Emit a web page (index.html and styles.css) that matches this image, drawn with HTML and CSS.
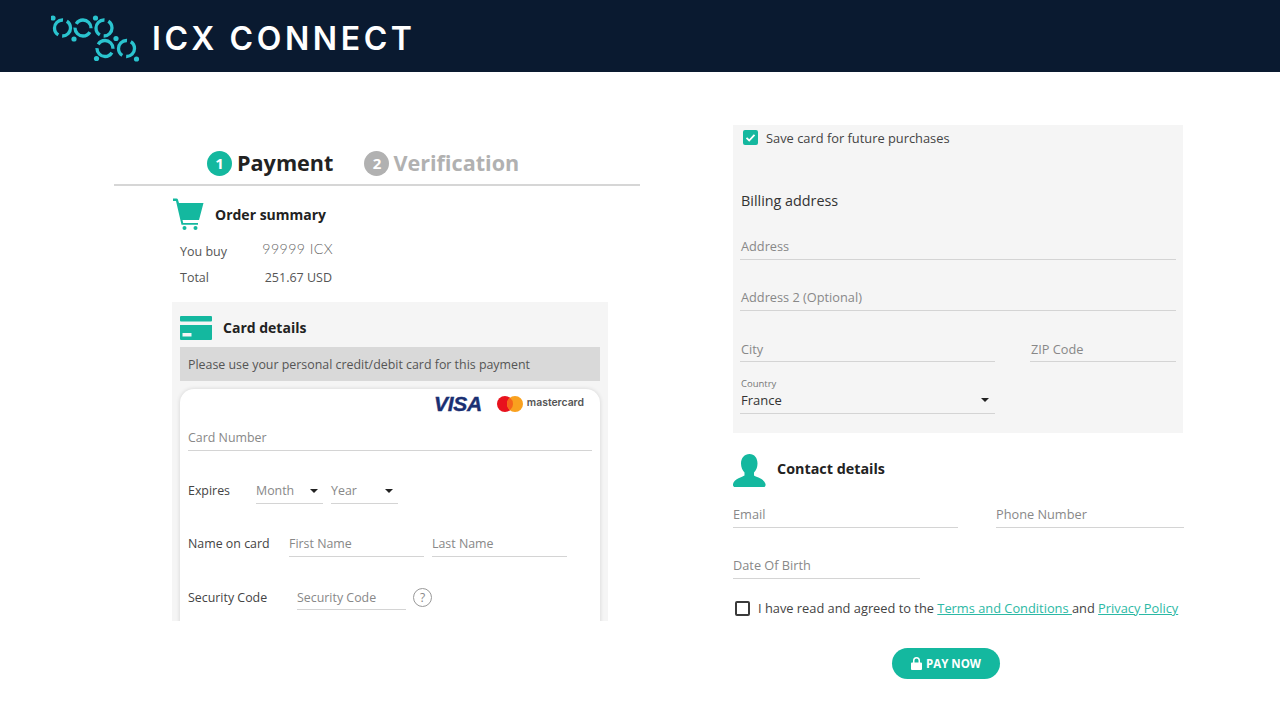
FILE: index.html
```html
<!DOCTYPE html>
<html lang="en">
<head>
<meta charset="utf-8">
<title>ICX Connect</title>
<link rel="stylesheet" href="styles.css">
</head>
<body>
<header class="topbar">
  <svg class="logo" width="90" height="50" viewBox="0 0 90 50" fill="none">
    <g class="logo-rings">
      <circle cx="11.5" cy="14" r="8"/>
      <circle class="ring-alt" cx="32" cy="14" r="8"/>
      <circle cx="53" cy="14" r="8"/>
      <circle class="ring-alt" cx="54" cy="34.5" r="8"/>
      <circle cx="75.5" cy="34.5" r="8"/>
    </g>
    <g class="logo-dots">
      <circle cx="2" cy="4" r="2.6"/>
      <circle cx="23" cy="25" r="2.6"/>
      <circle cx="44.5" cy="4" r="2.6"/>
      <circle cx="65" cy="24.5" r="2.6"/>
      <circle cx="45.5" cy="44.5" r="2.6"/>
      <circle cx="85.5" cy="45" r="2.6"/>
    </g>
  </svg>
  <span class="brand">ICX CONNECT</span>
</header>

<main class="slide">
  <section class="left">
    <div class="steps">
      <span class="step-num">1</span><span class="step-name">Payment</span>
      <span class="step-num off">2</span><span class="step-name off">Verification</span>
    </div>

    <div class="summary">
      <div class="summary-head">
        <svg class="icon-cart" width="32" height="33" viewBox="0 0 32 33">
          <path d="M1 .5h3.500a1.500 1.500 0 0 1 1.400 1L7 5h24.500l-4.500 17H10.500l.7 3H26v1.800H9.500L4 3H1z"/>
          <circle cx="12.5" cy="30" r="2"/>
          <circle cx="23.5" cy="30" r="2"/>
        </svg>
        <h2 class="section-title">Order summary</h2>
      </div>
      <div class="summary-row first-row"><span class="summary-label">You buy</span><span class="summary-amount">99999 ICX</span></div>
      <div class="summary-row"><span class="summary-label">Total</span><span class="summary-total">251.67 USD</span></div>
    </div>

    <div class="card-panel">
      <div class="card-head">
        <svg class="icon-card" width="32" height="24" viewBox="0 0 32 24">
          <rect width="32" height="5.5" rx="1"/>
          <path d="M0 9h32v14a1 1 0 0 1-1 1H1a1 1 0 0 1-1-1zM2.500 17v3.500h9V17z" fill-rule="evenodd"/>
        </svg>
        <h2 class="section-title">Card details</h2>
      </div>
      <p class="notice">Please use your personal credit/debit card for this payment</p>
      <div class="card-form">
        <div class="brands">
          <span class="visa">VISA</span>
          <svg class="mc-mark" width="26" height="16" viewBox="0 0 26 16">
            <circle cx="8" cy="8" r="8" fill="#e8121d"/>
            <circle cx="18" cy="8" r="8" fill="#f9a11f"/>
            <path d="M13 1.750a8 8 0 0 1 0 12.500 8 8 0 0 1 0-12.500z" fill="#f5651b"/>
          </svg>
          <span class="mc-text">mastercard</span>
        </div>
        <div class="field card-number">Card Number</div>
        <div class="form-row row-expires">
          <span class="row-label label-expires">Expires</span>
          <div class="field select month">Month<i class="caret"></i></div>
          <div class="field select year">Year<i class="caret"></i></div>
        </div>
        <div class="form-row row-name">
          <span class="row-label label-name">Name on card</span>
          <div class="field first">First Name</div>
          <div class="field last">Last Name</div>
        </div>
        <div class="form-row row-code">
          <span class="row-label label-code">Security Code</span>
          <div class="field code">Security Code</div>
          <span class="help">?</span>
        </div>
      </div>
    </div>
  </section>

  <section class="right">
    <div class="billing">
      <label class="save">
        <span class="check-on">
          <svg width="15" height="15" viewBox="0 0 15 15" fill="none"><path d="M3.500 7.800l2.700 2.700 5.300-5.700"/></svg>
        </span>
        Save card for future purchases
      </label>
      <h3 class="billing-title">Billing address</h3>
      <div class="field full">Address</div>
      <div class="field full">Address 2 (Optional)</div>
      <div class="billing-row">
        <div class="field city">City</div>
        <div class="field zip">ZIP Code</div>
      </div>
      <div class="country">
        <span class="country-label">Country</span>
        <div class="field select country-value">France<i class="caret"></i></div>
      </div>
    </div>

    <div class="contact-head">
      <svg class="icon-person" width="33" height="33" viewBox="0 0 33 33">
        <path d="M16.500 0c5 0 8 4 8 9.500 0 4-1.500 7-3.500 9v3c2 1.500 10 3 11.500 8.500.3 1.500-.5 3-2 3H2c-1.500 0-2.300-1.500-2-3 1.500-5.500 9.500-7 11.500-8.500v-3c-2-2-3.500-5-3.500-9C8 4 11.500 0 16.500 0z"/>
      </svg>
      <h2 class="section-title">Contact details</h2>
    </div>
    <div class="contact-row">
      <div class="field email">Email</div>
      <div class="field phone">Phone Number</div>
    </div>
    <div class="field dob">Date Of Birth</div>
    <div class="terms">
      <span class="check-off"></span>
      <span>I have read and agreed to the <a href="#">Terms and Conditions </a>and <a href="#">Privacy Policy</a></span>
    </div>
    <button class="pay" type="button">
      <svg width="11" height="13" viewBox="0 0 11 13"><path d="M2 5.500V3.600a3.500 3.500 0 0 1 7 0v1.900h1a1 1 0 0 1 1 1V12a1 1 0 0 1-1 1H1a1 1 0 0 1-1-1V6.500a1 1 0 0 1 1-1zm1.500 0h4V3.600a2 2 0 0 0-4 0z" fill-rule="evenodd"/></svg>
      PAY NOW
    </button>
  </section>
</main>
</body>
</html>
```
FILE: styles.css
```css
* { box-sizing: border-box; }
html, body { margin: 0; height: 720px; overflow: hidden; background: #fff; }
body { font-family: "Open Sans", "Liberation Sans", sans-serif; color: #444; font-size: 13px; }

.topbar { height: 72px; background: #0a1a30; display: flex; align-items: center; padding-left: 51px; }
.logo { display: block; margin-top: 6px; flex: none; }
.logo-rings circle { stroke: #2ac4cf; stroke-width: 3.3; stroke-dasharray: 21.13 4; stroke-dashoffset: 8.28; }
.logo-rings .ring-alt { stroke-dashoffset: 20.85; }
.logo-dots circle { fill: #2ac4cf; }
.brand { margin-left: 11px; margin-top: 6px; font-family: Inter, sans-serif; font-weight: 600; font-size: 32px; letter-spacing: 3.6px; color: #fff; line-height: 1; white-space: nowrap; }

.slide { display: flex; align-items: flex-start; }

/* left column */
.left { width: 526px; margin-left: 114px; margin-top: 73px; }
.steps { height: 41px; padding-left: 93px; padding-bottom: 3px; border-bottom: 2px solid #d6d6d6; display: flex; align-items: center; }
.step-num { width: 25px; height: 25px; border-radius: 50%; background: #14b89f; color: #fff; font-size: 15px; font-weight: 700; display: flex; align-items: center; justify-content: center; }
.step-num.off { background: #b1b1b1; margin-left: 31px; }
.step-name { margin-left: 5px; font-size: 21.6px; font-weight: 700; color: #222; line-height: 1; }
.step-name.off { color: #b1b1b1; margin-left: 4px; }

.summary { margin-left: 58px; width: 170px; }
.summary-head { display: flex; align-items: center; height: 33px; margin-top: 12px; }
.icon-cart { fill: #14b89f; flex: none; }
.section-title { margin: 0; font-size: 14px; font-weight: 700; color: #222; white-space: nowrap; }
.summary-head .section-title { margin-left: 11px; }
.summary-row { margin-left: 8px; height: 26px; display: flex; justify-content: space-between; align-items: center; width: 152px; font-size: 12.5px; color: #555; }
.first-row { margin-top: 7px; }
.summary-amount { margin: 0 -1px 5px 0; font-family: Lato, sans-serif; font-weight: 300; font-size: 14.2px; letter-spacing: .4px; color: #666; }

.card-panel { margin-left: 58px; margin-top: 12px; width: 436px; height: 319px; background: #f5f5f5; padding: 14px 8px 0; overflow: hidden; }
.card-head { display: flex; align-items: center; height: 24px; }
.icon-card { fill: #14b89f; flex: none; }
.card-head .section-title { margin-left: 11px; margin-bottom: 1px; }
.notice { margin: 7px 0 0; height: 34px; background: #d9d9d9; padding-left: 8px; line-height: 36px; font-size: 12.4px; color: #555; white-space: nowrap; }
.card-form { margin-top: 8px; height: 260px; background: #fff; border-radius: 14px; box-shadow: 0 0 4px rgba(0,0,0,.14); padding: 6px 8px 0; }
.brands { display: flex; align-items: center; justify-content: flex-end; height: 17px; padding-right: 8px; }
.visa { font-family: "Liberation Sans", sans-serif; font-weight: 700; font-style: italic; font-size: 21px; letter-spacing: -.3px; color: #1a2f72; -webkit-text-stroke: .4px #1a2f72; line-height: 1; }
.mc-mark { margin-left: 15px; }
.mc-text { margin-left: 4px; font-family: Inter, sans-serif; font-size: 10.4px; font-weight: 600; color: #555; line-height: 1; }

.field { height: 24px; line-height: 21px; border-bottom: 1px solid #d4d4d4; color: #888; font-size: 12.4px; white-space: nowrap; position: relative; }
.card-number { margin-top: 15px; }
.form-row { display: flex; align-items: flex-end; }
.row-label { color: #444; font-size: 12.4px; line-height: 20px; padding-bottom: 3px; }
.row-expires { margin-top: 29px; }
.label-expires { width: 68px; padding-bottom: 3px; }
.month { width: 67px; }
.year { width: 67px; margin-left: 8px; }
.row-name { margin-top: 29px; }
.label-name { width: 101px; }
.first { width: 135px; }
.last { width: 135px; margin-left: 8px; }
.row-code { margin-top: 29px; }
.label-code { width: 109px; padding-bottom: 2px; }
.code { width: 109px; line-height: 23px; }
.help { margin: 0 0 3px 7px; width: 19px; height: 19px; border-radius: 50%; border: 1px solid #999; color: #888; font-size: 12px; line-height: 17px; text-align: center; }

.caret { position: absolute; right: 5px; top: 9px; width: 0; height: 0; border: 4.5px solid transparent; border-top-color: #222; border-bottom-width: 0; }

/* right column */
.right { width: 451px; margin-left: 93px; margin-top: 53px; }
.billing { width: 450px; height: 308px; background: #f5f5f5; padding: 0 7px 0 7px; }
.save { display: flex; align-items: center; gap: 8px; padding: 2px 0 0 3px; height: 24px; font-size: 12.85px; color: #444; }
.check-on { width: 15px; height: 15px; border-radius: 2px; background: #14b89f; flex: none; display: block; margin-top: -1px; }
.check-on svg { display: block; stroke: #fff; stroke-width: 1.8; }
.billing-title { margin: 41px 0 0 1px; font-size: 14.35px; font-weight: 400; color: #333; line-height: 22px; }
.billing .field { padding-left: 1px; font-size: 12.75px; line-height: 22px; }
.billing .full { margin-top: 27px; line-height: 21px; }
.billing .billing-title + .full { margin-top: 24px; }
.billing-row { display: flex; margin-top: 27px; }
.city { width: 255px; }
.zip { width: 146px; margin-left: 35px; }
.country { width: 255px; margin-top: 16px; }
.country-label { display: block; font-size: 9.5px; line-height: 12px; color: #777; padding-left: 1px; }
.billing .country-value { color: #333; font-size: 13px; line-height: 20px; }
.country-value .caret { right: 6px; top: 8px; }

.contact-head { display: flex; align-items: flex-start; height: 33px; margin-top: 21px; }
.icon-person { fill: #14b89f; flex: none; }
.contact-head .section-title { margin-left: 11px; margin-top: 5px; font-size: 14.35px; line-height: 20px; }
.contact-row { display: flex; margin-top: 17px; }
.email { width: 225px; font-size: 12.75px; line-height: 20px; }
.phone { width: 188px; margin-left: 38px; font-size: 12.75px; line-height: 20px; }
.dob { width: 187px; margin-top: 27px; font-size: 12.75px; line-height: 20px; }
.terms { display: flex; align-items: center; margin-top: 19px; margin-left: 2px; height: 20px; font-size: 12.83px; color: #444; white-space: nowrap; }
.check-off { width: 15px; height: 15px; border: 2px solid #3a3a3a; border-radius: 2px; margin-right: 8px; flex: none; }
.terms a { color: #2cb9a5; }
.pay { display: flex; align-items: center; justify-content: center; gap: 4px; margin: 30px 0 0 159px; width: 108px; height: 31px; border: 0; border-radius: 16px; background: #14b89f; color: #fff; font-family: inherit; font-size: 11.5px; font-weight: 700; padding: 0; }
.pay svg { fill: #fff; }
```
